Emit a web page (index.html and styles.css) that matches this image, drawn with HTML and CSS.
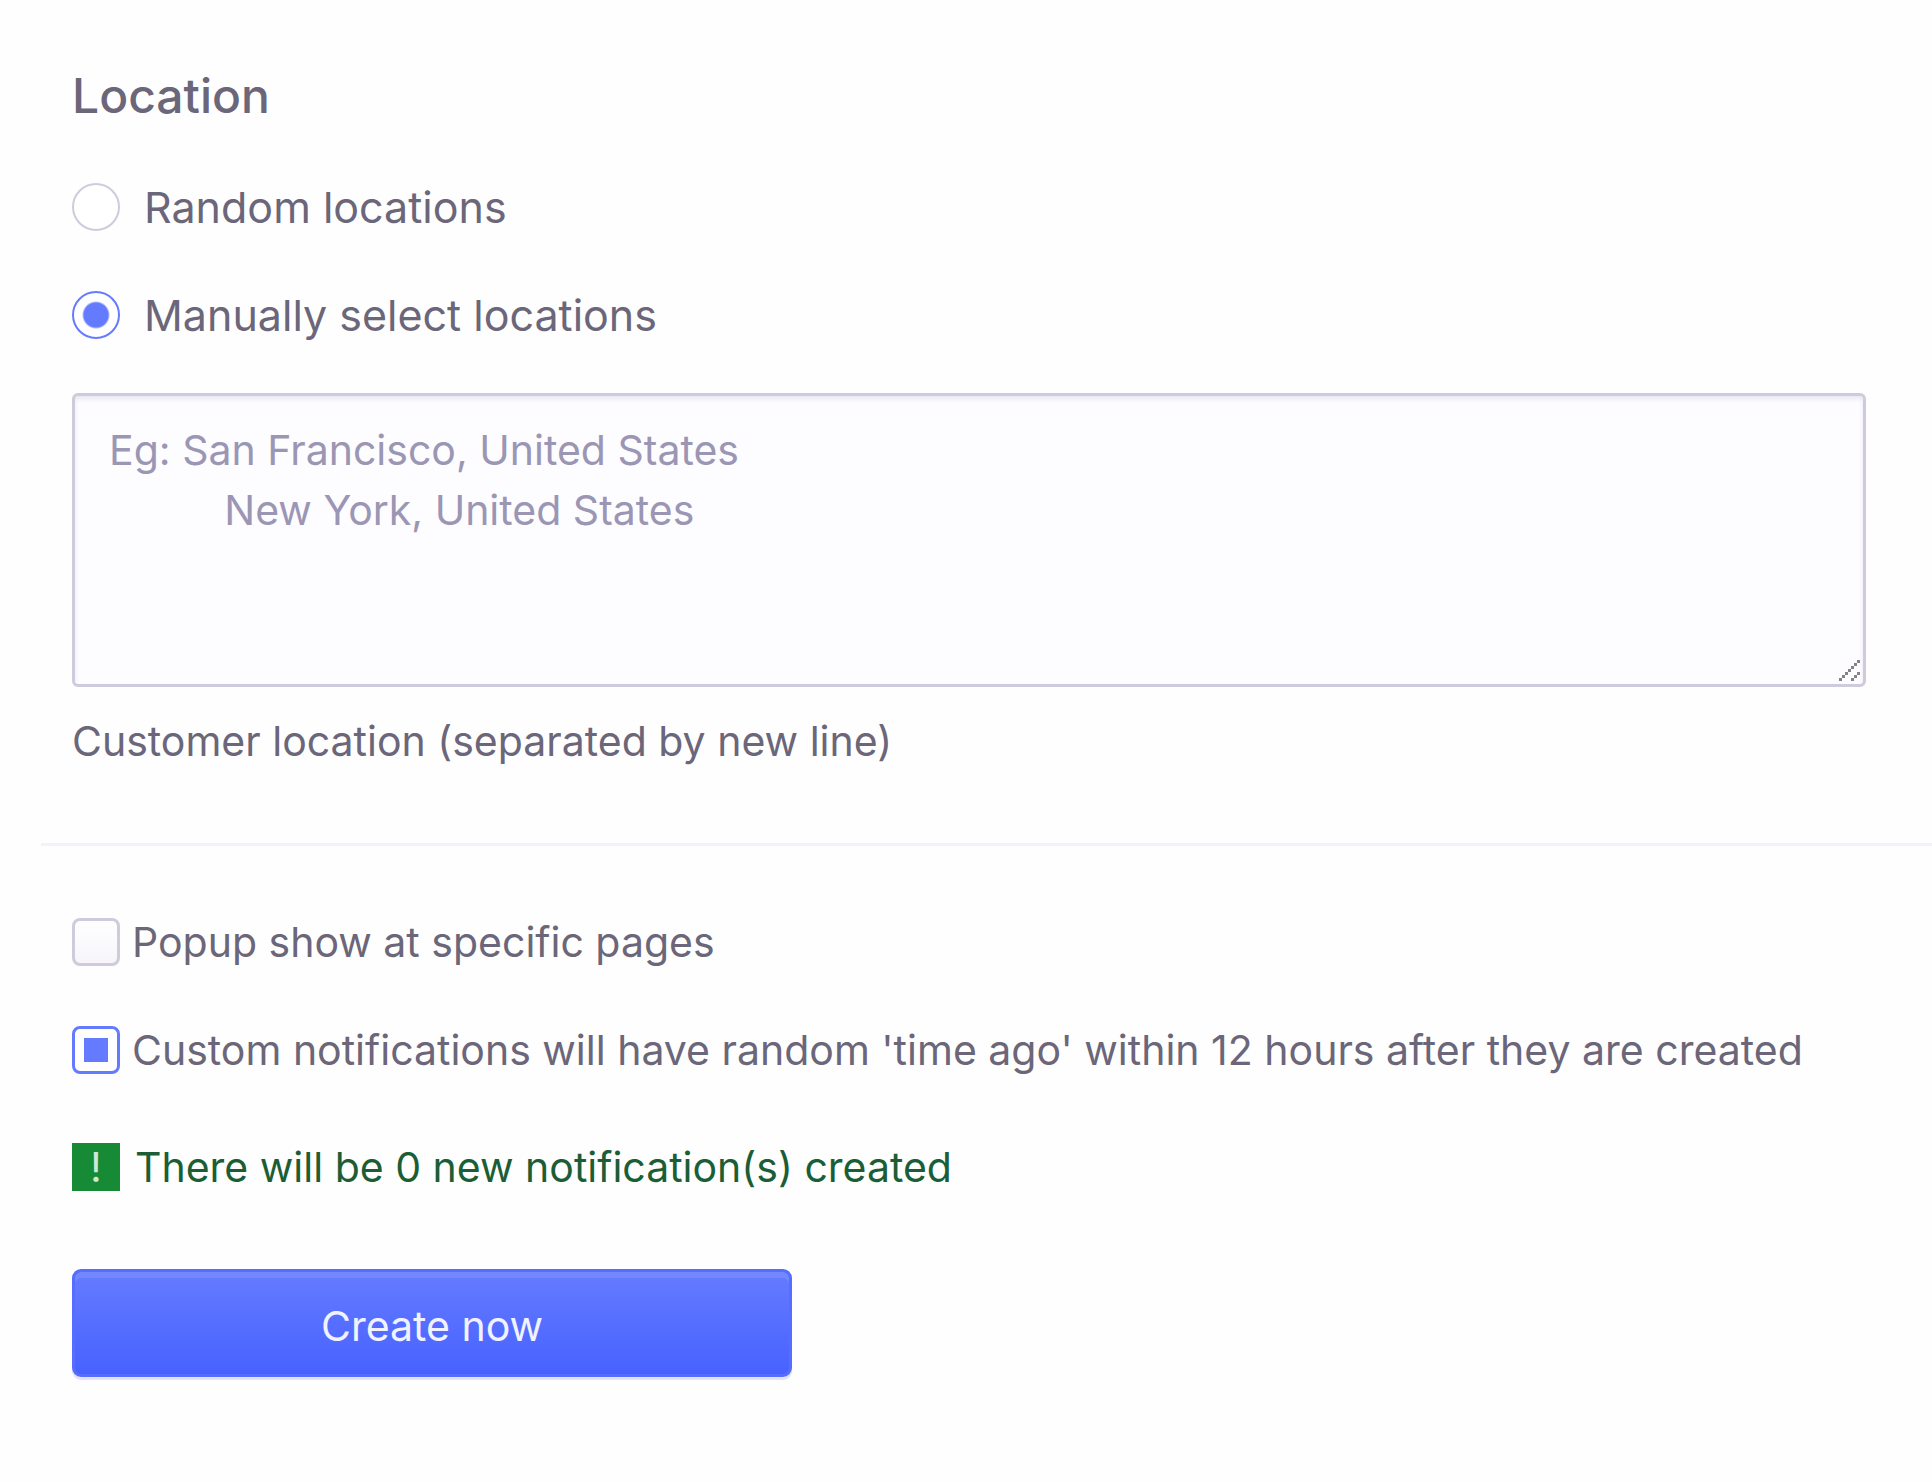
FILE: index.html
```
<!DOCTYPE html>
<html lang="en">
<head>
  <meta charset="UTF-8" />
  <title>Create notifications</title>
  <link rel="stylesheet" href="styles.css">
</head>
<body>
  <form id="formNotification">
    <fieldset class="section location">
      <legend>Location</legend>

      <label class="radio">
        <input type="radio" name="location" value="random" />
        <span>Random locations</span>
      </label>
      <label class="radio">
        <input type="radio" name="location" value="manual" checked />
        <span>Manually select locations</span>
      </label>

      <div class="textarea-wrap">
        <textarea id="locations" aria-describedby="locationsHelp" aria-label="Customer location" placeholder="Eg: San Francisco, United States
          New York, United States"></textarea>
        <svg class="grip" viewBox="0 0 7 7" shape-rendering="crispEdges" aria-hidden="true">
          <path d="M6 0h1v1h-1zM5 1h1v1h-1zM4 2h1v1h-1zM3 3h1v1h-1zM2 4h1v1h-1zM1 5h1v1h-1zM0 6h1v1h-1zM6 4h1v1h-1zM5 5h1v1h-1zM4 6h1v1h-1z" />
        </svg>
      </div>
      <p class="help" id="locationsHelp">Customer location (separated by new line)</p>
    </fieldset>

    <hr>

    <div class="section options">
      <label class="checkbox">
        <input type="checkbox" name="specificPages" />
        <span>Popup show at specific pages</span>
      </label>
      <label class="checkbox">
        <input type="checkbox" name="randomTime" checked />
        <span>Custom notifications will have random 'time ago' within 12 hours after they are created</span>
      </label>

      <p class="notice"><span class="notice-icon">!</span>There will be 0 new notification(s) created</p>

      <button type="submit">Create now</button>
    </div>
  </form>

  <script>
    document.getElementById("formNotification").addEventListener("submit", function(e) {
      e.preventDefault();
    });
  </script>
</body>
</html>
```
FILE: styles.css
```
body {
  margin: 0;
  background-color: #fefefe;
  color: #6b6679;
  font-family: Inter, "Liberation Sans", sans-serif;
  font-size: 41px;
  line-height: 60px;
}

form {
  padding: 66px 0;
}

.section {
  margin: 0;
  padding: 0 66px 0 72px;
  border: none;
}

legend {
  padding: 0 0 3px;
  font-size: 48px;
  font-weight: 500;
}

label {
  display: flex;
  align-items: center;
}

.radio {
  gap: 24px;
  margin-top: 48px;
  font-size: 43px;
}

input {
  flex: none;
  appearance: none;
  box-sizing: border-box;
  width: 48px;
  height: 48px;
  margin: 0;
  border: 3px solid #cfcbdc;
  background-color: white;
}

input[type="radio"] {
  border-width: 2px;
  border-radius: 50%;
}

input:checked {
  border-color: #657bff;
}

input[type="radio"]:checked {
  background: radial-gradient(circle, #657bff 12px, white 14px);
}

input[type="checkbox"] {
  border-radius: 8px;
  background: linear-gradient(#fefefe, #f7f5fb);
}

input[type="checkbox"]:checked {
  padding: 9px;
  background: linear-gradient(#657bff, #657bff) content-box, white;
}

.textarea-wrap {
  position: relative;
  margin-top: 48px;
}

textarea {
  display: block;
  box-sizing: border-box;
  width: 100%;
  height: 294px;
  margin: 0;
  padding: 24px 34px;
  border: 3px solid #cfcbdc;
  border-radius: 6px;
  background-color: #fdfcff;
  box-shadow: inset 0 3px 4px #e9e7f0;
  color: #6b6679;
  font: inherit;
  resize: none;
}

textarea::placeholder {
  color: #9b96b4;
}

.grip {
  position: absolute;
  right: 6px;
  bottom: 6px;
  width: 21px;
  height: 21px;
  fill: #85838a;
  pointer-events: none;
}

.help {
  margin: 24px 0 0;
}

hr {
  margin: 72px 0 0 41px;
  border: none;
  border-top: 3px solid #f3f2f8;
}

.options {
  padding-top: 66px;
}

.checkbox {
  gap: 12px;
  margin-bottom: 48px;
}

.notice {
  display: flex;
  align-items: center;
  gap: 15px;
  margin: 57px 0 72px;
  color: #1b5e35;
}

.notice-icon {
  width: 48px;
  height: 48px;
  background-color: #168a35;
  color: #cfe8d5;
  line-height: 48px;
  text-align: center;
}

button {
  display: block;
  width: 720px;
  max-width: 100%;
  height: 108px;
  padding: 5px 0 0;
  border: 3px solid #566dff;
  border-radius: 9px;
  background: linear-gradient(#657bff, #4762ff);
  box-shadow: inset 0 6px 0 #7388ff, 0 3px 0 #e4e2f5;
  color: #f0f2ff;
  font: inherit;
  cursor: pointer;
}
```
